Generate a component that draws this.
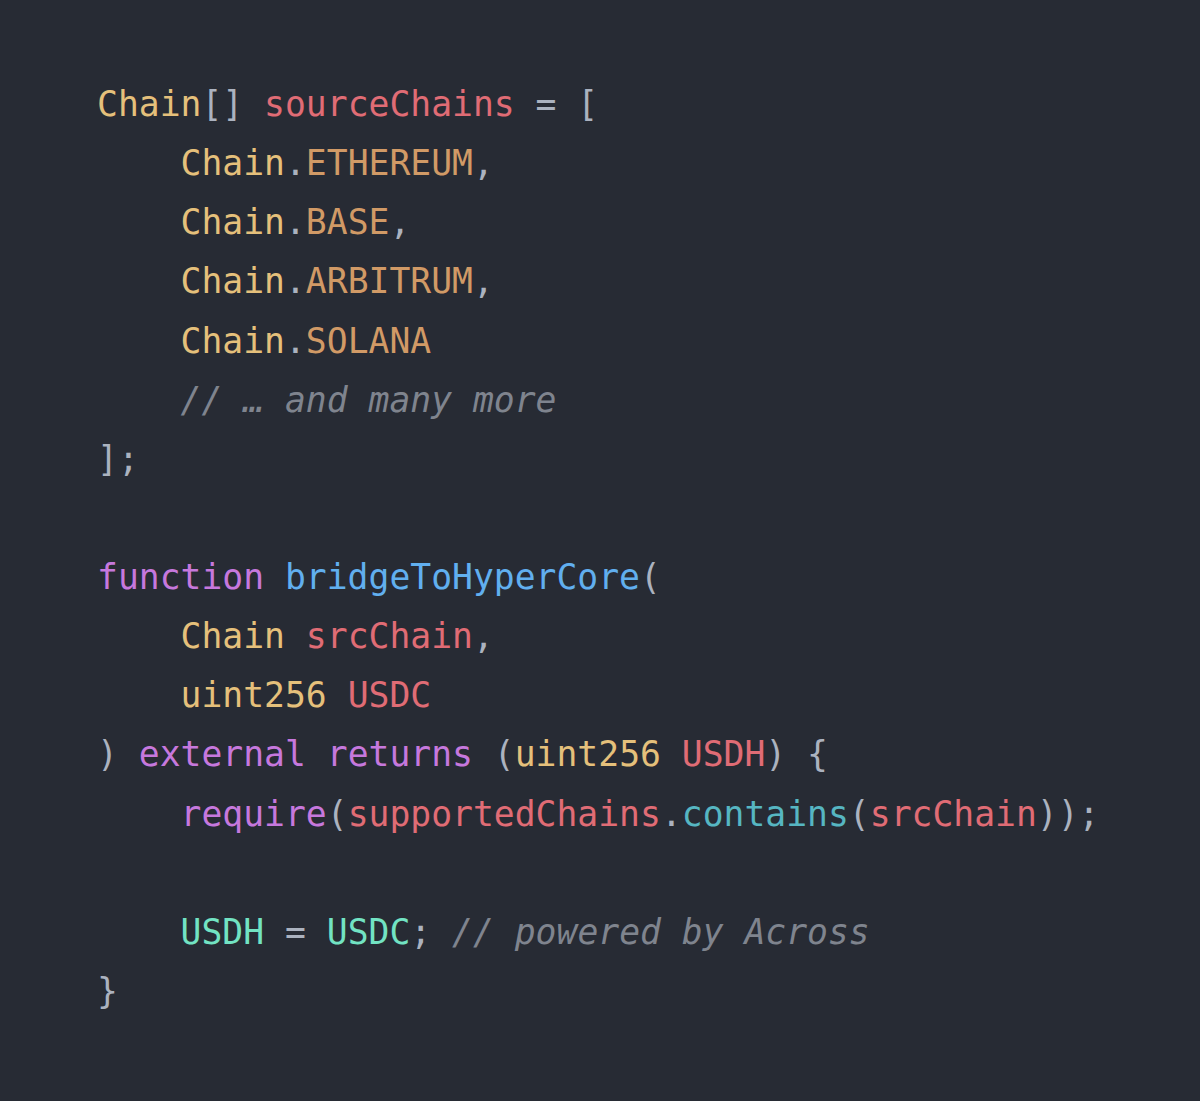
const C = {
  type: 'text-[#e5c07b]',
  vari: 'text-[#e06c75]',
  punc: 'text-[#abb2bf]',
  enumv: 'text-[#d19a66]',
  kw: 'text-[#c678dd]',
  fn: 'text-[#61afef]',
  method: 'text-[#56b6c2]',
  mint: 'text-[#72e3c3]',
  comment: 'italic text-[#7f848e]',
};

type Tok = [string, string];

const lines: Tok[][] = [
  [[C.type, 'Chain'], [C.punc, '[]'], [C.punc, ' '], [C.vari, 'sourceChains'], [C.punc, ' = [']],
  [[C.punc, '    '], [C.type, 'Chain'], [C.punc, '.'], [C.enumv, 'ETHEREUM'], [C.punc, ',']],
  [[C.punc, '    '], [C.type, 'Chain'], [C.punc, '.'], [C.enumv, 'BASE'], [C.punc, ',']],
  [[C.punc, '    '], [C.type, 'Chain'], [C.punc, '.'], [C.enumv, 'ARBITRUM'], [C.punc, ',']],
  [[C.punc, '    '], [C.type, 'Chain'], [C.punc, '.'], [C.enumv, 'SOLANA']],
  [[C.punc, '    '], [C.comment, '// … and many more']],
  [[C.punc, '];']],
  [],
  [[C.kw, 'function'], [C.punc, ' '], [C.fn, 'bridgeToHyperCore'], [C.punc, '(']],
  [[C.punc, '    '], [C.type, 'Chain'], [C.punc, ' '], [C.vari, 'srcChain'], [C.punc, ',']],
  [[C.punc, '    '], [C.type, 'uint256'], [C.punc, ' '], [C.vari, 'USDC']],
  [
    [C.punc, ') '], [C.kw, 'external'], [C.punc, ' '], [C.kw, 'returns'], [C.punc, ' ('],
    [C.type, 'uint256'], [C.punc, ' '], [C.vari, 'USDH'], [C.punc, ') {'],
  ],
  [
    [C.punc, '    '], [C.kw, 'require'], [C.punc, '('], [C.vari, 'supportedChains'], [C.punc, '.'],
    [C.method, 'contains'], [C.punc, '('], [C.vari, 'srcChain'], [C.punc, '));'],
  ],
  [],
  [
    [C.punc, '    '], [C.mint, 'USDH'], [C.punc, ' = '], [C.mint, 'USDC'], [C.punc, '; '],
    [C.comment, '// powered by Across'],
  ],
  [[C.punc, '}']],
];

export default function App() {
  return (
    <div className="h-[1101px] w-[1200px] overflow-hidden bg-[#272b34] pl-[97px] pt-[75px]">
      <pre
        className="text-[34.7px] leading-[59.13px]"
        style={{ fontFamily: '"DejaVu Sans Mono", "Liberation Mono", monospace' }}
      >
        {lines.map((line, i) => (
          <div key={i} className="h-[59.13px]">
            {line.map(([cls, text], j) => (
              <span key={j} className={cls}>
                {text}
              </span>
            ))}
          </div>
        ))}
      </pre>
    </div>
  );
}
